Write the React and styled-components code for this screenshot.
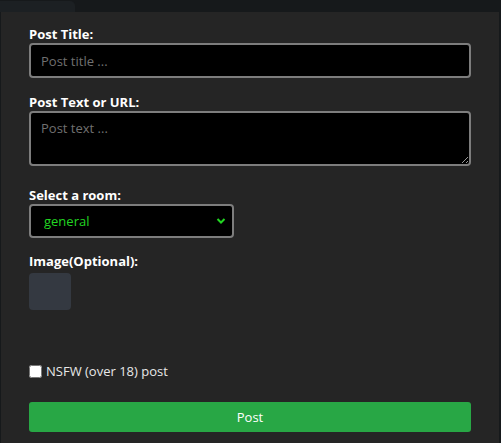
import styled, { createGlobalStyle } from "styled-components";

const GlobalStyle = createGlobalStyle`
    html, body {
        margin: 0;
        padding: 0;
        background: #16191b;
        height: 100%;
    }
    body {
        font-family: "Open Sans", "Noto Sans", sans-serif;
        font-size: 13px;
        color: #fff;
    }
`;

const TopStrip = styled.div`
    height: 12px;
    display: flex;
    align-items: flex-end;
`;

const Tab = styled.div`
    width: 75px;
    height: 11px;
    background: #1c2023;
    border-top-right-radius: 5px;
`;

const Panel = styled.form`
    margin: 0 2px 0 1px;
    height: 431px;
    box-sizing: border-box;
    background: #252525;
    padding: 13px 28px 0;
    display: flex;
    flex-direction: column;
`;

const Label = styled.label`
    display: block;
    font-weight: 700;
    line-height: 18px;
    margin-top: ${(p) => p.$top || 0}px;
`;

const fieldBase = `
    display: block;
    box-sizing: border-box;
    width: 442px;
    background: #000;
    border: 2px solid #7d7d7d;
    border-radius: 4px;
    color: #fff;
    font-family: "Open Sans", "Noto Sans", sans-serif;
    font-size: 13px;
    outline: none;
    &::placeholder {
        color: #707070;
    }
`;

const TextInput = styled.input`
    ${fieldBase}
    height: 35px;
    padding: 0 10px;
`;

const TextArea = styled.textarea`
    ${fieldBase}
    height: 55px;
    padding: 6px 10px;
    resize: vertical;
`;

const SelectWrap = styled.div`
    position: relative;
    width: 205px;
`;

const Select = styled.select`
    ${fieldBase}
    width: 205px;
    height: 34px;
    padding: 0 0 0 13px;
    appearance: none;
    color: #22d622;
`;

const Chevron = styled.svg`
    position: absolute;
    right: 8px;
    top: 13px;
    pointer-events: none;
`;

const ImageBox = styled.div`
    width: 42px;
    height: 37px;
    margin-top: 3px;
    background: #343941;
    border-radius: 4px;
`;

const CheckRow = styled.label`
    display: flex;
    align-items: center;
    gap: 4px;
    margin-top: 52px;
    color: #e8e8e8;
    line-height: 18px;
`;

const Check = styled.input`
    width: 13px;
    height: 13px;
    margin: 0;
`;

const PostButton = styled.button`
    margin-top: 22px;
    width: 442px;
    height: 30px;
    border: none;
    border-radius: 3px;
    background: #28a745;
    color: #fff;
    font-family: "Open Sans", "Noto Sans", sans-serif;
    font-size: 13px;
`;

const App = () => {
    return (
        <>
            <GlobalStyle />
            <TopStrip>
                <Tab />
            </TopStrip>
            <Panel onSubmit={(e) => e.preventDefault()}>
                <Label>Post Title:</Label>
                <TextInput placeholder="Post title ..." />
                <Label $top={15}>Post Text or URL:</Label>
                <TextArea placeholder="Post text ..." />
                <Label $top={20}>Select a room:</Label>
                <SelectWrap>
                    <Select defaultValue="general">
                        <option value="general">general</option>
                    </Select>
                    <Chevron width="10" height="8" viewBox="0 0 10 8">
                        <polyline points="1.5,2 5,5.5 8.5,2" fill="none" stroke="#22d622" strokeWidth="2" />
                    </Chevron>
                </SelectWrap>
                <Label $top={14}>Image(Optional):</Label>
                <ImageBox />
                <CheckRow>
                    <Check type="checkbox" />
                    NSFW (over 18) post
                </CheckRow>
                <PostButton type="submit">Post</PostButton>
            </Panel>
        </>
    );
};

export default App;
